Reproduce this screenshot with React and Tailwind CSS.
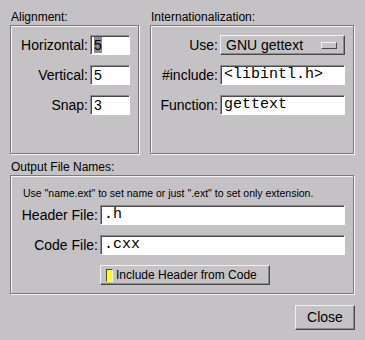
const sans = { fontFamily: '"Liberation Sans", Arial, sans-serif' };

function Field({ label, value, mono, selected, width }) {
  return (
    <div className="flex items-center justify-end h-[20px]">
      <span className="text-[14px] text-black mr-[2px] leading-[20px] whitespace-nowrap">{label}</span>
      <div
        className={`h-[20px] ${width} bg-white border border-t-[#8c8a8c] border-l-[#8c8a8c] border-r-white border-b-white shadow-[inset_1px_1px_0_#4a494a] flex items-center pl-[3px] text-black leading-[16px] whitespace-nowrap ${mono ? "text-[15px]" : "text-[14px]"}`}
        style={mono ? { fontFamily: '"Liberation Mono", "Courier New", monospace' } : undefined}
      >
        {selected ? <span className="bg-[#8c8a8c] h-[16px]">{value}</span> : value}
      </div>
    </div>
  );
}

function Group({ title, className, children }) {
  return (
    <div className="flex flex-col">
      <div className="h-[15px] text-[12px] leading-[15px] pl-[1px] text-black whitespace-nowrap">{title}</div>
      <div className={`border border-[#7b7a7b] shadow-[inset_1px_1px_0_#f4f4f4,1px_1px_0_#f4f4f4] ${className}`}>
        {children}
      </div>
    </div>
  );
}

export default function App() {
  return (
    <div className="w-[365px] h-[340px] bg-[#c4c2c4] pt-[10px] pl-[10px] text-black" style={sans}>
      <div className="flex">
        <Group title="Alignment:" className="w-[129px] h-[129px] flex flex-col gap-[10px] pt-[9px] pr-[8px]">
          <Field label="Horizontal:" value="5" selected width="w-[40px]" />
          <Field label="Vertical:" value="5" width="w-[40px]" />
          <Field label="Snap:" value="3" width="w-[40px]" />
        </Group>
        <div className="ml-[11px]">
          <Group title="Internationalization:" className="w-[204px] h-[129px] flex flex-col gap-[10px] pt-[9px] pr-[8px]">
            <div className="flex items-center justify-end h-[20px]">
              <span className="text-[14px] mr-[2px] leading-[20px]">Use:</span>
              <div className="w-[125px] h-[20px] border border-t-[#f0f0f0] border-l-[#f0f0f0] border-r-[#4a494a] border-b-[#4a494a] shadow-[inset_-1px_-1px_0_#8c8a8c] flex items-center justify-between pl-[5px] pr-[7px] text-[14px] leading-[18px]">
                <span>GNU gettext</span>
                <div className="w-[16px] h-[7px] border border-t-[#f0f0f0] border-l-[#f0f0f0] border-r-[#4a494a] border-b-[#4a494a]" />
              </div>
            </div>
            <Field label="#include:" value="<libintl.h>" mono width="w-[125px]" />
            <Field label="Function:" value="gettext" mono width="w-[125px]" />
          </Group>
        </div>
      </div>

      <div className="mt-[6px]">
        <Group title="Output File Names:" className="w-[344px] h-[119px] flex flex-col pt-[7px] pr-[8px]">
          <div className="h-[20px] leading-[20px] text-[10.5px] pl-[12px] mb-[2px] whitespace-nowrap">
            Use "name.ext" to set name or just ".ext" to set only extension.
          </div>
          <div className="flex flex-col gap-[10px]">
            <Field label="Header File:" value=".h" mono width="w-[245px]" />
            <Field label="Code File:" value=".cxx" mono width="w-[245px]" />
            <div className="flex pl-[89px]">
              <div className="w-[170px] h-[20px] border border-t-[#f0f0f0] border-l-[#f0f0f0] border-r-[#4a494a] border-b-[#4a494a] shadow-[inset_-1px_-1px_0_#8c8a8c] flex items-center pl-[5px]">
                <div className="w-[7px] h-[13px] shrink-0 bg-[#ffff00] border border-t-[#4a494a] border-l-[#4a494a] border-r-[#f0f0f0] border-b-[#f0f0f0]" />
                <span className="ml-[3px] text-[12px] leading-[18px] whitespace-nowrap">Include Header from Code</span>
              </div>
            </div>
          </div>
        </Group>
      </div>

      <div className="flex justify-end pr-[10px] mt-[11px]">
        <div className="w-[60px] h-[25px] border border-t-[#f0f0f0] border-l-[#f0f0f0] border-r-[#4a494a] border-b-[#4a494a] shadow-[inset_-1px_-1px_0_#8c8a8c] flex items-center justify-center text-[14px]">
          Close
        </div>
      </div>
    </div>
  );
}
